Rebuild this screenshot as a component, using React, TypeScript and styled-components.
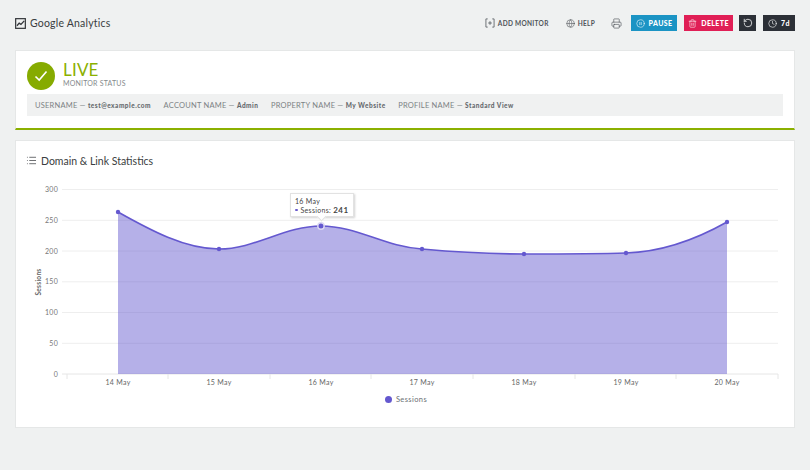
import React from "react";
import styled, { createGlobalStyle } from "styled-components";
import { CirclePause, Clock, Globe, List, Printer, RotateCcw, Trash2 } from "lucide-react";

const GlobalStyle = createGlobalStyle`
  html, body { margin: 0; padding: 0; }
  body {
    background: #eff1f1;
    font-family: "Lato", "Noto Sans", sans-serif;
    color: #333;
    overflow: hidden;
  }
`;

// ─── Layout ──────────────────────────────────────────────────────────────────
const Page = styled.div`
  width: 810px;
  height: 470px;
  box-sizing: border-box;
  padding: 0 15px;
`;

const Header = styled.div`
  height: 50px;
  display: flex;
  align-items: center;
  padding-bottom: 4px;
  box-sizing: border-box;
`;

const HeaderTitle = styled.div`
  display: flex;
  align-items: center;
  gap: 4px;
  font-size: 10.5px;
  letter-spacing: 0.2px;
  color: #3a3d40;
  flex: 1;
`;

const Actions = styled.div`
  display: flex;
  align-items: center;
`;

const TextAction = styled.span<{ $gap: number }>`
  display: flex;
  align-items: center;
  gap: 3px;
  font-size: 6.5px;
  font-weight: 700;
  letter-spacing: 0.3px;
  color: #50545a;
  margin-right: ${(p) => p.$gap}px;
`;

const Button = styled.span<{ $bg: string; $w: number; $gap?: number }>`
  display: flex;
  align-items: center;
  justify-content: center;
  gap: 4px;
  width: ${(p) => p.$w}px;
  height: 16px;
  background: ${(p) => p.$bg};
  color: #fff;
  font-size: 7px;
  font-weight: 900;
  letter-spacing: 0.4px;
  margin-right: ${(p) => p.$gap ?? 0}px;
`;

const Card = styled.div`
  background: #fff;
  border: 1px solid #e5e7e7;
  box-sizing: border-box;
`;

// ─── Status card ─────────────────────────────────────────────────────────────
const StatusCard = styled(Card)`
  height: 80px;
  border-bottom: 2px solid #8bb000;
  padding: 8px 11px 0;
  margin-bottom: 10px;
`;

const StatusRow = styled.div`
  display: flex;
  align-items: center;
  gap: 8px;
  height: 34px;
`;

const StatusBadge = styled.div`
  width: 28px;
  height: 28px;
  border-radius: 50%;
  background: #86ab00;
  display: flex;
  align-items: center;
  justify-content: center;
`;

const StatusText = styled.div`
  display: flex;
  flex-direction: column;
  gap: 2px;
  margin-top: -3px;
`;

const LiveLabel = styled.span`
  font-size: 17px;
  line-height: 15px;
  color: #8bb000;
  letter-spacing: 0.2px;
`;

const StatusLabel = styled.span`
  font-size: 7px;
  line-height: 9px;
  color: #858a8d;
  letter-spacing: 0.2px;
`;

const InfoBar = styled.div`
  height: 22px;
  margin-top: 1px;
  background: #f0f1f1;
  display: flex;
  align-items: center;
  gap: 12.5px;
  padding-left: 8px;
  font-size: 7.5px;
  letter-spacing: 0.22px;
  color: #7c8184;
`;

const InfoValue = styled.b`
  font-size: 6.5px;
  font-weight: 900;
  color: #666a6e;
  letter-spacing: 0.5px;
`;

// ─── Chart card ──────────────────────────────────────────────────────────────
const ChartCard = styled(Card)`
  height: 288px;
  position: relative;
`;

const ChartTitle = styled.div`
  height: 35px;
  display: flex;
  align-items: center;
  gap: 4px;
  padding: 4px 0 0 10px;
  box-sizing: border-box;
  font-size: 10.5px;
  color: #3a3d40;
`;

const ChartSvg = styled.svg`
  display: block;
  font-family: "Lato", "Noto Sans", sans-serif;
`;

const Tooltip = styled.div`
  position: absolute;
  left: 274px;
  top: 52px;
  width: 64px;
  height: 24px;
  box-sizing: border-box;
  padding: 3px 0 0 4px;
  background: #fff;
  border: 1px solid #e2e2e2;
  box-shadow: 1px 1px 2px rgba(0, 0, 0, 0.18);
  font-size: 7px;
  line-height: 8.5px;
  color: #444;
  letter-spacing: 0.3px;
  &::after {
    content: "";
    position: absolute;
    left: 27px;
    bottom: -4px;
    width: 6px;
    height: 6px;
    background: #fff;
    transform: rotate(45deg);
    border-right: 1px solid #e2e2e2;
    border-bottom: 1px solid #e2e2e2;
  }
`;

const TooltipRow = styled.div`
  display: flex;
  align-items: center;
  gap: 3px;
  b { font-size: 8px; font-weight: 700; letter-spacing: 0.5px; }
`;

const TooltipDot = styled.i`
  width: 2.5px;
  height: 2.5px;
  border-radius: 50%;
  background: #6a5acd;
`;

const Legend = styled.div`
  display: flex;
  justify-content: center;
  align-items: center;
  gap: 4px;
  margin-top: 5px;
  padding-left: 2px;
  font-size: 7.5px;
  letter-spacing: 0.4px;
  color: #6c7074;
`;

const LegendDot = styled.i`
  width: 7px;
  height: 7px;
  border-radius: 50%;
  background: #6458cf;
`;

// ─── Data ────────────────────────────────────────────────────────────────────
const infoItems = [
  ["USERNAME", "test@example.com"],
  ["ACCOUNT NAME", "Admin"],
  ["PROPERTY NAME", "My Website"],
  ["PROFILE NAME", "Standard View"],
];

const yTicks = [
  { label: "300", y: 189.5 },
  { label: "250", y: 220.3 },
  { label: "200", y: 251 },
  { label: "150", y: 281.8 },
  { label: "100", y: 312.5 },
  { label: "50", y: 343.3 },
  { label: "0", y: 374 },
];

const points = [
  { label: "14 May", x: 118, y: 212 },
  { label: "15 May", x: 219, y: 249 },
  { label: "16 May", x: 321, y: 226 },
  { label: "17 May", x: 422, y: 249 },
  { label: "18 May", x: 524, y: 254 },
  { label: "19 May", x: 626, y: 253 },
  { label: "20 May", x: 727, y: 222 },
];

const xTicks = [67, 168, 270, 371, 473, 575, 676, 778];

const curve =
  "M118,212 C150,230 185,249 219,249 C255,249 285,226 321,226 C357,226 385,247 422,249 C455,252 490,254 524,254 C560,254 595,254 626,253 C660,252 695,240 727,222";

const AddMonitorIcon = () => (
  <svg width="10" height="10" viewBox="0 0 11 11" fill="none" stroke="#55595e" strokeWidth="0.9">
    <path d="M3 1H1V10H3M8 1H10V10H8M5.5 3.5V7.5M3.5 5.5H7.5" />
  </svg>
);

const AnalyticsIcon = () => (
  <svg width="11" height="11" viewBox="0 0 10 10" fill="none" stroke="#33363a">
    <rect x="0.6" y="0.6" width="8.8" height="8.8" strokeWidth="1.1" />
    <path d="M1.8 7L3.8 4.7L5.4 5.8L8.4 2.6" strokeWidth="1.2" />
  </svg>
);

const App: React.FC = () => (
  <Page>
    <GlobalStyle />
    <Header>
      <HeaderTitle>
        <AnalyticsIcon />
        Google Analytics
      </HeaderTitle>
      <Actions>
        <TextAction $gap={17}>
          <AddMonitorIcon />
          ADD MONITOR
        </TextAction>
        <TextAction $gap={16}>
          <Globe size={9} strokeWidth={1.5} />
          HELP
        </TextAction>
        <TextAction $gap={9}>
          <Printer size={11} strokeWidth={1.4} />
        </TextAction>
        <Button $bg="#1b94c4" $w={46} $gap={7}>
          <CirclePause size={9} strokeWidth={1.5} />
          PAUSE
        </Button>
        <Button $bg="#e01f56" $w={49} $gap={6}>
          <Trash2 size={9} strokeWidth={1.5} />
          DELETE
        </Button>
        <Button $bg="#2c3037" $w={17} $gap={7}>
          <RotateCcw size={10} strokeWidth={1.8} />
        </Button>
        <Button $bg="#2c3037" $w={32}>
          <Clock size={9} strokeWidth={1.6} />
          7d
        </Button>
      </Actions>
    </Header>

    <StatusCard>
      <StatusRow>
        <StatusBadge>
          <svg width="14" height="12" viewBox="0 0 14 12" fill="none" stroke="#fff" strokeWidth="1.6">
            <path d="M1.5 6.5L5.2 10L12.5 1.5" />
          </svg>
        </StatusBadge>
        <StatusText>
          <LiveLabel>LIVE</LiveLabel>
          <StatusLabel>MONITOR STATUS</StatusLabel>
        </StatusText>
      </StatusRow>
      <InfoBar>
        {infoItems.map(([name, value]) => (
          <span key={name}>
            {name} — <InfoValue>{value}</InfoValue>
          </span>
        ))}
      </InfoBar>
    </StatusCard>

    <ChartCard>
      <ChartTitle>
        <List size={11} strokeWidth={1.6} />
        Domain &amp; Link Statistics
      </ChartTitle>
      <ChartSvg width="778" height="214" viewBox="16 176 778 214">
        {yTicks.map((t) => (
          <g key={t.label}>
            <line x1="62" x2="778" y1={t.y} y2={t.y} stroke={t.label === "0" ? "#e6e6e6" : "#eeeeee"} />
            <text x="58" y={t.y + 2.5} textAnchor="end" fontSize="7" fill="#777" letterSpacing="0.3">
              {t.label}
            </text>
          </g>
        ))}
        {xTicks.map((x) => (
          <line key={x} x1={x} x2={x} y1="374" y2="379" stroke="#e6e6e6" />
        ))}
        <text
          x="0"
          y="0"
          transform="translate(41 282) rotate(-90)"
          textAnchor="middle"
          fontSize="6.5"
          fontWeight="700"
          fill="#666"
          letterSpacing="0.3"
        >
          Sessions
        </text>
        <path d={`${curve} L727,374 L118,374 Z`} fill="#5a50cb" fillOpacity="0.45" />
        <path d={curve} fill="none" stroke="#6458cf" strokeWidth="1.6" />
        {points.map((p) => (
          <g key={p.label}>
            <circle cx={p.x} cy={p.y} r="2.2" fill="#6458cf" />
            <text x={p.x} y="385" textAnchor="middle" fontSize="7" fill="#666" letterSpacing="0.3">
              {p.label}
            </text>
          </g>
        ))}
        <circle cx="321" cy="226" r="3.2" fill="#6458cf" stroke="#dcd9f3" strokeWidth="1.4" />
      </ChartSvg>
      <Legend>
        <LegendDot />
        Sessions
      </Legend>
      <Tooltip>
        16 May
        <TooltipRow>
          <TooltipDot />
          <span>
            Sessions: <b>241</b>
          </span>
        </TooltipRow>
      </Tooltip>
    </ChartCard>
  </Page>
);

export default App;
